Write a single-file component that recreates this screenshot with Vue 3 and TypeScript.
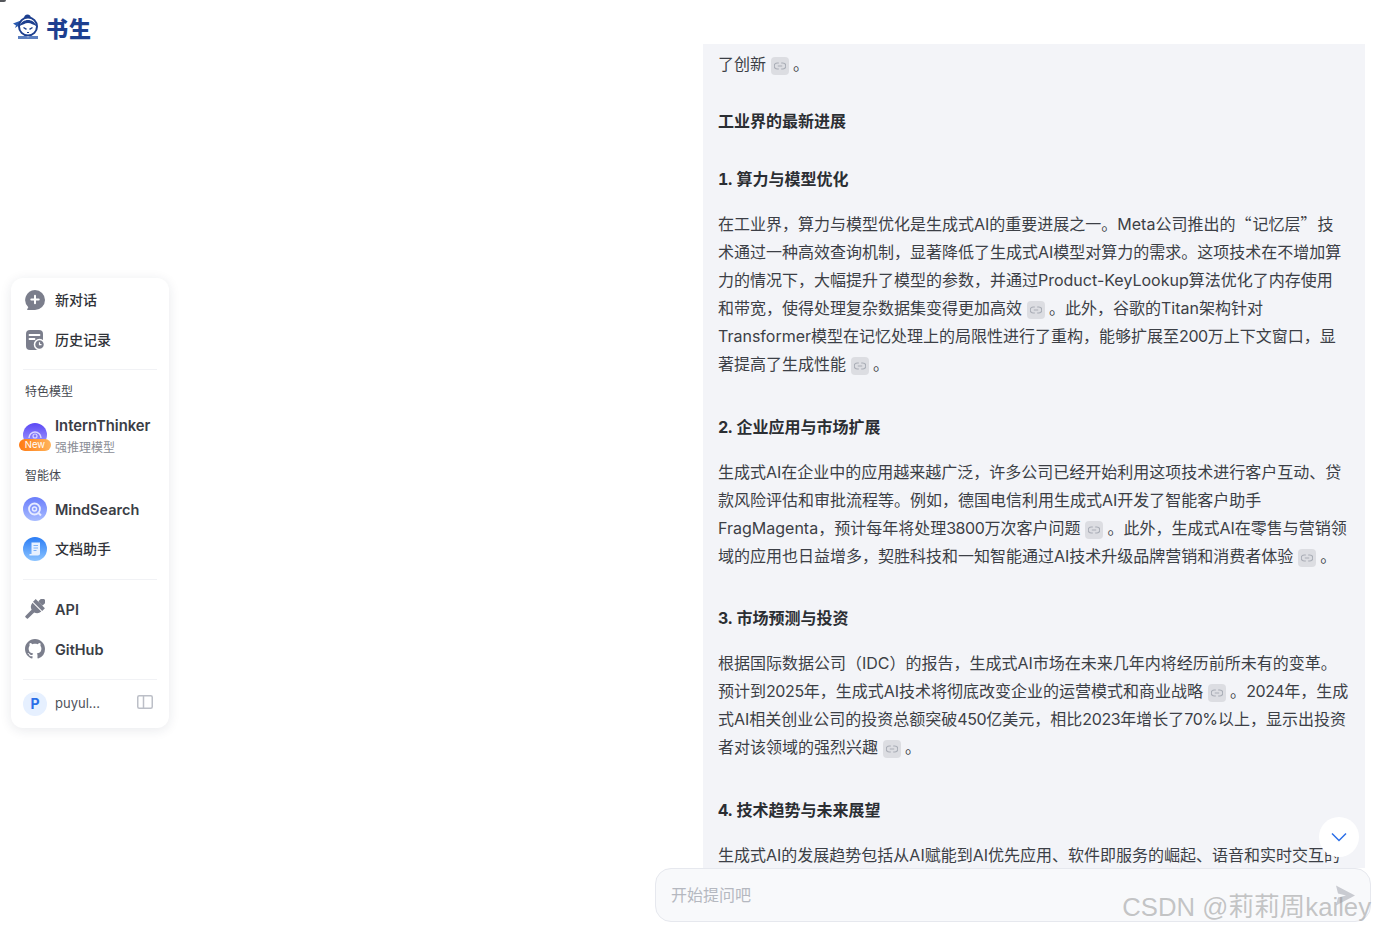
<script setup lang="ts">
interface Block {
  kind: "text" | "title" | "head";
  lines: string[];
}

// "@" marks where a citation chip sits in the line
const blocks: Block[] = [
  { kind: "text", lines: ["了创新 @ 。"] },
  { kind: "title", lines: ["工业界的最新进展"] },
  { kind: "head", lines: ["1. 算力与模型优化"] },
  {
    kind: "text",
    lines: [
      "在工业界，算力与模型优化是生成式AI的重要进展之一。Meta公司推出的“记忆层”技",
      "术通过一种高效查询机制，显著降低了生成式AI模型对算力的需求。这项技术在不增加算",
      "力的情况下，大幅提升了模型的参数，并通过Product-KeyLookup算法优化了内存使用",
      "和带宽，使得处理复杂数据集变得更加高效 @ 。此外，谷歌的Titan架构针对",
      "Transformer模型在记忆处理上的局限性进行了重构，能够扩展至200万上下文窗口，显",
      "著提高了生成性能 @ 。",
    ],
  },
  { kind: "head", lines: ["2. 企业应用与市场扩展"] },
  {
    kind: "text",
    lines: [
      "生成式AI在企业中的应用越来越广泛，许多公司已经开始利用这项技术进行客户互动、贷",
      "款风险评估和审批流程等。例如，德国电信利用生成式AI开发了智能客户助手",
      "FragMagenta，预计每年将处理3800万次客户问题 @ 。此外，生成式AI在零售与营销领",
      "域的应用也日益增多，契胜科技和一知智能通过AI技术升级品牌营销和消费者体验 @ 。",
    ],
  },
  { kind: "head", lines: ["3. 市场预测与投资"] },
  {
    kind: "text",
    lines: [
      "根据国际数据公司（IDC）的报告，生成式AI市场在未来几年内将经历前所未有的变革。",
      "预计到2025年，生成式AI技术将彻底改变企业的运营模式和商业战略 @ 。2024年，生成",
      "式AI相关创业公司的投资总额突破450亿美元，相比2023年增长了70%以上，显示出投资",
      "者对该领域的强烈兴趣 @ 。",
    ],
  },
  { kind: "head", lines: ["4. 技术趋势与未来展望"] },
  {
    kind: "text",
    lines: ["生成式AI的发展趋势包括从AI赋能到AI优先应用、软件即服务的崛起、语音和实时交互的"],
  },
];

function parts(line: string): string[] {
  return line.split(/(@|“|”|\d+)/).filter((p) => p !== "");
}

function isQuote(part: string): boolean {
  return part === "“" || part === "”";
}

function isDigits(part: string): boolean {
  return /^\d+$/.test(part);
}
</script>

<template>
  <div class="page">
    <span class="corner"></span>
    <aside class="left">
      <header class="brand">
        <svg class="brand-mark" width="28" height="28" viewBox="0 0 28 28" fill="none">
          <path d="M11 5.500c0-2.500 1.500-4 3.500-4s3.500 1.500 3.500 4z" fill="#1d3f8f" />
          <path d="M0 10.500 8 7.500l1 3-7 4.500 1-2.500z" fill="#2a5bb0" />
          <circle cx="15" cy="13.500" r="9" fill="#fff" stroke="#1d3f8f" stroke-width="2" />
          <path d="M6.500 13c1.500-4 5-6 8.500-6s7 2 8.500 6c-3-1-5.500-3-8.500-3s-5.500 2-8.500 3z" fill="#1d3f8f" />
          <path d="M10.500 14.500l3 1.800M19.500 14.500l-3 1.800" stroke="#1d3f8f" stroke-width="1.400" />
          <path d="M14 19.500h2" stroke="#1d3f8f" stroke-width="1" />
          <path d="M5 23h8.500l1.500 1.500 1.500-1.500H25v3H5z" fill="#5c7fc0" />
        </svg>
        <span class="brand-name">书生</span>
      </header>

      <nav class="side">
        <a class="row">
          <svg class="ico" width="20" height="20" viewBox="0 0 20 20">
            <path d="M10 0a10 10 0 0 1 0 20H2.800c-.6 0-.8-.5-.5-1l1-1.800A10 10 0 0 1 10 0z" fill="#7b7e8c" />
            <path d="M10 5.800v7.400M6.300 9.500h7.400" stroke="#fff" stroke-width="2" stroke-linecap="round" />
          </svg>
          <span>新对话</span>
        </a>
        <a class="row">
          <svg class="ico" width="20" height="20" viewBox="0 0 20 20">
            <rect x="1" y="0" width="17" height="20" rx="4" fill="#7b7e8c" />
            <path d="M4.500 5h10M4.500 9h5" stroke="#fff" stroke-width="1.800" stroke-linecap="round" />
            <circle cx="14.500" cy="14.500" r="5" fill="#7b7e8c" stroke="#fff" stroke-width="1.500" />
            <path d="M14.500 12.300v2.400h2" stroke="#fff" stroke-width="1.200" fill="none" />
          </svg>
          <span>历史记录</span>
        </a>
        <hr class="rule first" />

        <p class="label">特色模型</p>
        <a class="row model">
          <span class="badge-wrap">
            <svg class="ico-round" width="24" height="24" viewBox="0 0 24 24">
              <defs>
                <linearGradient id="gThink" x1="0" y1="0" x2="0" y2="1">
                  <stop offset="0" stop-color="#5b48f5" />
                  <stop offset="1" stop-color="#a9a4ff" />
                </linearGradient>
              </defs>
              <circle cx="12" cy="12" r="12" fill="url(#gThink)" />
              <path d="M6 15a6 6 0 0 1 12 0" fill="none" stroke="#d9d6ff" stroke-width="1.500" />
              <circle cx="12" cy="13" r="2" fill="none" stroke="#d9d6ff" stroke-width="1.200" />
            </svg>
            <span class="new-tag">New</span>
          </span>
          <span class="two-line">
            <span class="latin wide">InternThinker</span>
            <small>强推理模型</small>
          </span>
        </a>

        <p class="label agents">智能体</p>
        <a class="row round">
          <svg class="ico-round" width="24" height="24" viewBox="0 0 24 24">
            <defs>
              <linearGradient id="gMind" x1="0" y1="0" x2="0" y2="1">
                <stop offset="0" stop-color="#6a7dfb" />
                <stop offset="1" stop-color="#a8bcff" />
              </linearGradient>
            </defs>
            <circle cx="12" cy="12" r="12" fill="url(#gMind)" />
            <circle cx="11.500" cy="12" r="5.500" fill="none" stroke="#e8ecff" stroke-width="1.800" />
            <circle cx="11.500" cy="12" r="2" fill="none" stroke="#e8ecff" stroke-width="1.400" />
            <path d="M15 15.500l3 3" stroke="#e8ecff" stroke-width="2" />
          </svg>
          <span class="latin">MindSearch</span>
        </a>
        <a class="row round">
          <svg class="ico-round" width="24" height="24" viewBox="0 0 24 24">
            <defs>
              <linearGradient id="gDoc" x1="0" y1="0" x2="0" y2="1">
                <stop offset="0" stop-color="#2b7df5" />
                <stop offset="1" stop-color="#8cc4ff" />
              </linearGradient>
            </defs>
            <circle cx="12" cy="12" r="12" fill="url(#gDoc)" />
            <path d="M8.500 5.500h8.500v11c0 1.300-.8 2-2 2H6.500v-1.500h2z" fill="#e6f1ff" />
            <path d="M10.500 8.500h4.500M10.500 11h4.500M10.500 13.500h3" stroke="#7fb2f7" stroke-width="1" />
          </svg>
          <span>文档助手</span>
        </a>
        <hr class="rule" />

        <a class="row">
          <svg class="ico" width="20" height="20" viewBox="0 0 20 20">
            <g transform="rotate(45 10 10)" fill="#7b7e8c">
              <rect x="7" y="-3.500" width="6" height="6" rx="1" />
              <path d="M3.500 2.500h13v3.800H3.500z" />
              <path d="M3.800 7.300h12.400A6.500 6.500 0 0 1 11.800 13v1.500H8.200V13a6.500 6.500 0 0 1-4.400-5.700z" />
              <rect x="8.200" y="14" width="3.600" height="8.500" rx=".8" />
            </g>
          </svg>
          <span class="latin">API</span>
        </a>
        <a class="row">
          <svg class="ico" width="20" height="20" viewBox="0 0 16 16">
            <path
              fill="#7b7e8c"
              d="M8 0C3.580 0 0 3.580 0 8c0 3.540 2.290 6.530 5.470 7.590.4.070.55-.17.55-.38 0-.19-.01-.82-.01-1.490-2.010.37-2.530-.49-2.690-.94-.09-.23-.48-.94-.82-1.130-.28-.15-.68-.52-.01-.53.630-.01 1.080.58 1.230.82.720 1.210 1.870.87 2.330.66.070-.52.280-.87.510-1.070-1.780-.2-3.640-.89-3.640-3.950 0-.87.310-1.590.820-2.150-.08-.2-.36-1.020.08-2.120 0 0 .67-.21 2.200.82.640-.18 1.320-.27 2-.27s1.360.09 2 .27c1.530-1.040 2.200-.82 2.200-.82.440 1.100.16 1.920.08 2.120.51.560.82 1.270.82 2.150 0 3.070-1.870 3.750-3.650 3.950.29.250.54.730.54 1.480 0 1.070-.01 1.930-.01 2.200 0 .21.150.46.550.38A8.010 8.010 0 0 0 16 8c0-4.420-3.580-8-8-8z"
            />
          </svg>
          <span class="latin">GitHub</span>
        </a>
        <hr class="rule" />

        <div class="user">
          <span class="avatar">P</span>
          <span class="user-name">puyul...</span>
          <svg class="toggle" width="16" height="14" viewBox="0 0 16 14" fill="none">
            <rect x=".75" y=".75" width="14.500" height="12.500" rx="1.500" stroke="#bcbfc7" stroke-width="1.500" />
            <path d="M6.500 1v12" stroke="#bcbfc7" stroke-width="1.500" />
          </svg>
        </div>
      </nav>
    </aside>

    <main class="chat">
      <section class="panel">
        <div v-for="(block, i) in blocks" :key="i" :class="['block', block.kind]">
          <div v-for="(line, j) in block.lines" :key="j" class="line">
            <template v-for="(part, k) in parts(line)" :key="k">
              <span v-if="part === '@'" class="chip">
                <svg width="12" height="8" viewBox="0 0 12 8" fill="none">
                  <path d="M4.800 1H3.200a3 3 0 0 0 0 6h1.600M7.200 1h1.600a3 3 0 0 1 0 6H7.200M3.800 4h4.400" stroke="#a9adb6" stroke-width="1.200" />
                </svg>
              </span>
              <span v-else-if="isQuote(part)" class="quote" lang="zh-CN">{{ part }}</span>
              <span v-else-if="isDigits(part)" class="digits">{{ part }}</span>
              <span v-else>{{ part }}</span>
            </template>
          </div>
        </div>
      </section>

      <button class="to-bottom" type="button" aria-label="scroll down">
        <svg width="16" height="10" viewBox="0 0 16 10" fill="none">
          <path d="M1 1.500 8 8.500l7-7" stroke="#2b6fe8" stroke-width="1.500" />
        </svg>
      </button>

      <div class="composer">
        <span class="placeholder">开始提问吧</span>
        <svg class="send" width="20" height="21" viewBox="0 0 20 21">
          <path d="M1 .5 20 10.500 1 20.500l2-8 8-2-8-2z" fill="#c9cbd1" />
        </svg>
      </div>
      <span class="watermark">CSDN @莉莉周kailey</span>
    </main>
  </div>
</template>

<style>
html,
body {
  margin: 0;
  background: #fff;
}
</style>

<style scoped>
.page {
  position: relative;
  display: flex;
  height: 930px;
  overflow: hidden;
  font-family: Inter, "Noto Sans CJK SC", sans-serif;
  color: #2f3238;
}
.corner {
  position: absolute;
  left: 0;
  top: 0;
  width: 6px;
  height: 2px;
  border-bottom-right-radius: 4px;
  background: #55575c;
}
.left {
  width: 703px;
  flex: none;
}
.brand {
  display: flex;
  align-items: center;
  gap: 5px;
  padding: 13px 0 0 13px;
  height: 28px;
}
.brand-name {
  font-size: 22px;
  font-weight: 900;
  letter-spacing: 1px;
  color: #1d3f8f;
}
.side {
  box-sizing: border-box;
  display: flex;
  flex-direction: column;
  width: 158px;
  height: 450px;
  margin: 237px 0 0 11px;
  padding: 2px 12px 0;
  background: #fff;
  border-radius: 12px;
  box-shadow: 0 2px 12px rgba(30, 40, 70, 0.1);
}
.row {
  display: flex;
  align-items: center;
  gap: 10px;
  height: 40px;
  flex: none;
  padding-left: 2px;
  font-size: 14px;
  font-weight: 500;
}
.row > span:last-child {
  margin-bottom: 2px;
}
.row > span.latin:last-child {
  margin-bottom: 0;
}
.ico {
  flex: none;
}
.ico-round {
  flex: none;
  display: block;
}
.round {
  padding-left: 0;
  gap: 8px;
}
.latin {
  font-size: 14.500px;
  font-weight: 600;
  color: #3a3d45;
}
.latin.wide {
  font-size: 14.800px;
}
.rule {
  width: 100%;
  height: 1px;
  margin: 10px 0 9px;
  border: 0;
  background: #f1f2f5;
  flex: none;
}
.rule.first {
  margin: 9px 0 0;
}
.label {
  margin: 14px 0 0;
  padding-left: 2px;
  font-size: 12px;
  line-height: 16px;
  color: #45484f;
}
.agents {
  margin: 9px 0 4px;
  line-height: 18px;
}
.model {
  padding-left: 0;
  gap: 8px;
  margin-top: 14px;
  height: 44px;
}
.row.model > span:last-child {
  margin: 2px 0 0;
}
.badge-wrap {
  position: relative;
  flex: none;
  width: 24px;
  height: 24px;
  margin-top: -2px;
}
.new-tag {
  position: absolute;
  left: -4px;
  top: 16px;
  width: 32px;
  height: 12px;
  border-radius: 6px;
  background: linear-gradient(90deg, #ff7a12, #ffb45c);
  color: #fff;
  font-size: 9.500px;
  line-height: 12px;
  font-weight: 400;
  text-align: center;
}
.two-line {
  display: flex;
  flex-direction: column;
  line-height: 22px;
  white-space: nowrap;
}
.two-line small {
  font-size: 12px;
  font-weight: 400;
  line-height: 22px;
  color: #8a8d96;
}
.user {
  display: flex;
  align-items: center;
  height: 24px;
  margin-top: 3px;
}
.avatar {
  flex: none;
  width: 24px;
  height: 24px;
  border-radius: 50%;
  background: #e6f0ff;
  color: #2b6fe8;
  font-size: 14px;
  font-weight: 700;
  line-height: 24px;
  text-align: center;
}
.user-name {
  margin: 0 0 2px 8px;
  font-size: 13px;
  color: #50535b;
}
.toggle {
  margin: -4px 4px 0 auto;
}
.chat {
  position: relative;
  flex: 1;
  padding-top: 44px;
  min-width: 0;
}
.panel {
  box-sizing: border-box;
  width: 662px;
  height: 824px;
  padding: 6px 0 0 15px;
  overflow: hidden;
  background: #f3f4f8;
}
.block {
  margin-bottom: 17px;
}
.line {
  height: 28px;
  font-size: 16px;
  line-height: 28px;
  white-space: nowrap;
  color: #3c3f46;
}
.quote {
  font-family: "Noto Sans CJK SC", sans-serif;
  line-height: 0;
  letter-spacing: 1px;
}
.digits {
  letter-spacing: -0.400px;
}
.title {
  margin-top: 29px;
  margin-bottom: 30px;
}
.block.text:first-child {
  margin-bottom: 0;
}
.head {
  margin-top: 35px;
}
.head:nth-child(7) {
  margin-top: 34px;
}
.title + .head {
  margin-top: 0;
}
.title .line,
.head .line {
  font-weight: 700;
  font-variant-numeric: tabular-nums;
  color: #2b2e33;
}
.chip {
  display: inline-flex;
  align-items: center;
  justify-content: center;
  width: 18px;
  height: 18px;
  vertical-align: 0;
  border-radius: 4px;
  background: #dcdde2;
}
.to-bottom {
  position: absolute;
  left: 616px;
  top: 817px;
  width: 40px;
  height: 40px;
  padding: 0;
  border: 0;
  border-radius: 50%;
  background: #fff;
  display: flex;
  align-items: center;
  justify-content: center;
}
.composer {
  position: absolute;
  left: -48px;
  top: 868px;
  box-sizing: border-box;
  display: flex;
  align-items: center;
  justify-content: space-between;
  width: 716px;
  height: 54px;
  padding: 0 15px;
  background: #f8f9fb;
  border: 1px solid #e6e8ee;
  border-radius: 16px;
}
.placeholder {
  margin-bottom: 2px;
  font-size: 16px;
  color: #b5b8c0;
}
.send {
  margin: 1px 0 0;
}
.watermark {
  position: absolute;
  right: 3px;
  top: 889px;
  font-family: "Liberation Sans", "Noto Sans CJK SC", sans-serif;
  font-size: 25.700px;
  line-height: 36px;
  white-space: nowrap;
  color: rgba(150, 150, 150, 0.55);
}
</style>
